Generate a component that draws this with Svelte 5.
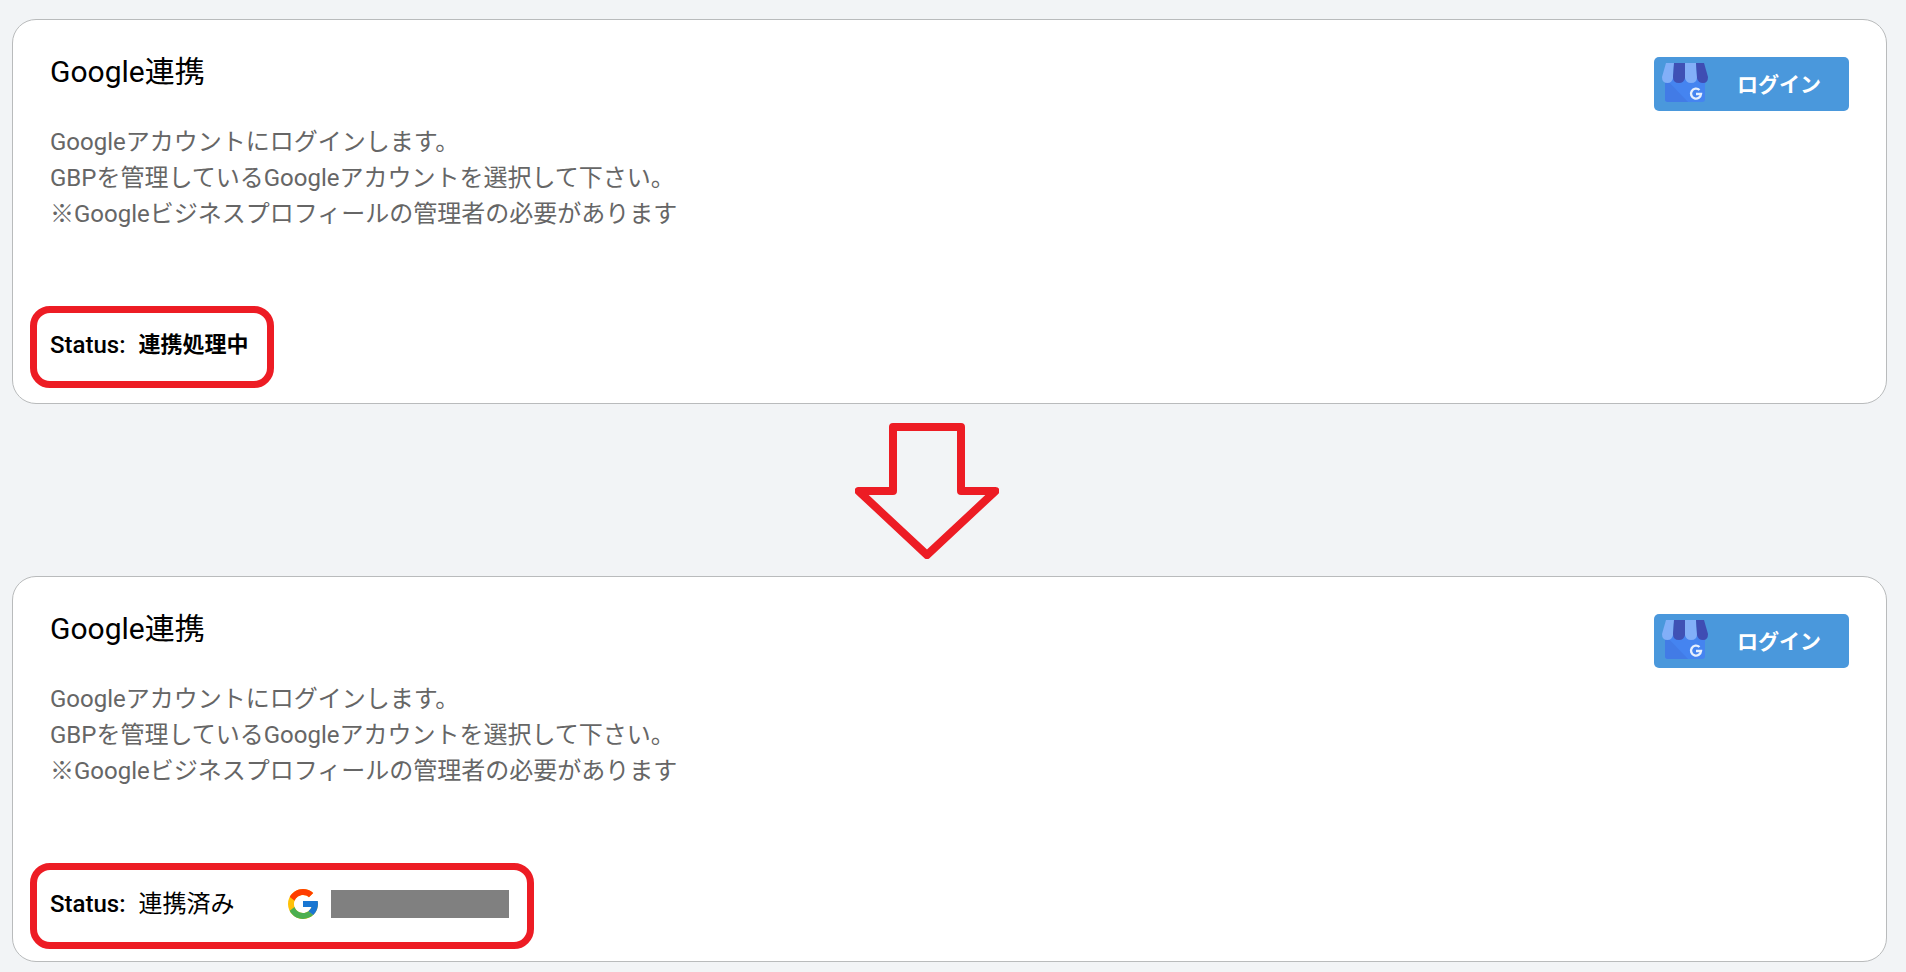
<script>
  const cards = [
    { id: 'pending', status: '連携処理中', linked: false },
    { id: 'linked', status: '連携済み', linked: true },
  ];

  function login() {
    console.log('login');
  }
</script>

<main>
  {#each cards as card, i (card.id)}
    {#if i > 0}
      <div class="step">
        <svg width="144" height="136" viewBox="0 0 144 136" aria-hidden="true">
          <path d="M38 4H106V68H140.500L72 132L3.500 68H38Z" />
        </svg>
      </div>
    {/if}

    <section class="card">
      <div class="card-top">
        <div>
          <h2>Google連携</h2>
          <p>
            Googleアカウントにログインします。<br />
            GBPを管理しているGoogleアカウントを選択して下さい。<br />
            ※Googleビジネスプロフィールの管理者の必要があります
          </p>
        </div>

        <button type="button" class="login" on:click={login}>
          <svg width="48" height="42" viewBox="0 0 48 42" aria-hidden="true">
            <path d="M4 13H44V37Q44 40 41 40H7Q4 40 4 37Z" fill="#4584f0" />
            <path d="M4 16L27 40H7Q4 40 4 37Z" fill="#427be6" />
            <path d="M5 1H13L12 16Q11 21 6.500 21Q1 21 1 15Z" fill="#82aff8" />
            <path d="M13 1H24V16Q23 21 18 21Q12 21 12 15Z" fill="#3f51b5" />
            <path d="M24 1H35L36 15Q36 21 30 21Q25 21 24 16Z" fill="#82aff8" />
            <path d="M35 1H43L47 15Q47 21 42 21Q37 21 36 16Z" fill="#3f4db3" />
            <path d="M38.500 28A5 5 0 1 0 40 32H35" fill="none" stroke="#e6effd" stroke-width="2.400" />
          </svg>
          <span>ログイン</span>
        </button>
      </div>

      <div class="status">
        <span class="label">Status:</span>
        {#if card.linked}
          <span class="value">{card.status}</span>
          <div class="account">
            <svg width="30" height="30" viewBox="4 4 40 40" aria-hidden="true">
              <path fill="#FFC107" d="M43.611 20.083H42V20H24v8h11.303c-1.649 4.657-6.080 8-11.303 8-6.627 0-12-5.373-12-12s5.373-12 12-12c3.059 0 5.842 1.154 7.961 3.039l5.657-5.657C34.046 6.053 29.268 4 24 4 12.955 4 4 12.955 4 24s8.955 20 20 20 20-8.955 20-20c0-1.341-.138-2.650-.389-3.917z" />
              <path fill="#FF3D00" d="M6.306 14.691l6.571 4.819C14.655 15.108 18.961 12 24 12c3.059 0 5.842 1.154 7.961 3.039l5.657-5.657C34.046 6.053 29.268 4 24 4 16.318 4 9.656 8.337 6.306 14.691z" />
              <path fill="#4CAF50" d="M24 44c5.166 0 9.860-1.977 13.409-5.192l-6.190-5.238C29.211 35.091 26.715 36 24 36c-5.202 0-9.619-3.317-11.283-7.946l-6.522 5.025C9.505 39.556 16.227 44 24 44z" />
              <path fill="#1976D2" d="M43.611 20.083H42V20H24v8h11.303c-.792 2.237-2.231 4.166-4.087 5.571l6.193 5.237C36.971 39.205 44 34 44 24c0-1.341-.138-2.650-.389-3.917z" />
            </svg>
            <span class="masked"></span>
          </div>
        {:else}
          <strong class="value">{card.status}</strong>
        {/if}
      </div>
    </section>
  {/each}
</main>

<style>
  :global(body) {
    background: #f2f4f6;
  }

  main {
    padding: 19px 19px 10px 12px;
    font-family: Roboto, "Noto Sans CJK JP", sans-serif;
    color: #000;
  }

  .card {
    box-sizing: border-box;
    min-height: 385px;
    padding: 37px 37px 12px;
    display: flex;
    flex-direction: column;
    background: #fff;
    border: 1px solid #b9bbbc;
    border-radius: 24px;
  }

  .card-top {
    display: flex;
    justify-content: space-between;
    align-items: flex-start;
  }

  h2 {
    margin: 0 0 37px;
    font-size: 30px;
    font-weight: 400;
    line-height: 30px;
  }

  p {
    margin: 0;
    font-size: 24px;
    line-height: 36px;
    color: #666;
  }

  .login {
    width: 195px;
    height: 54px;
    padding: 0 28px 2px 7px;
    display: flex;
    align-items: center;
    justify-content: space-between;
    border: none;
    border-radius: 5px;
    background: #4a98dc;
    color: #fff;
    font-family: inherit;
    font-size: 21px;
    font-weight: 700;
    cursor: pointer;
  }

  /* red frame around the status row */
  .status {
    align-self: flex-start;
    margin: 74px 0 0 -20px;
    padding: 14px 18px 18px 13px;
    display: flex;
    align-items: center;
    border: 7px solid #ed1c24;
    border-radius: 20px;
    font-size: 24px;
    line-height: 36px;
  }

  .label {
    margin-right: 13px;
    font-weight: 500;
  }

  strong {
    font-size: 22px;
    font-weight: 700;
  }

  .account {
    height: 40px;
    margin-left: 54px;
    display: flex;
    align-items: center;
    gap: 13px;
  }

  .masked {
    width: 178px;
    height: 28px;
    background: #808080;
  }

  .step {
    padding: 19px 46px 17px 0;
    display: flex;
    justify-content: center;
  }

  .step path {
    fill: none;
    stroke: #ed1c24;
    stroke-width: 8px;
    stroke-linejoin: round;
  }
</style>
